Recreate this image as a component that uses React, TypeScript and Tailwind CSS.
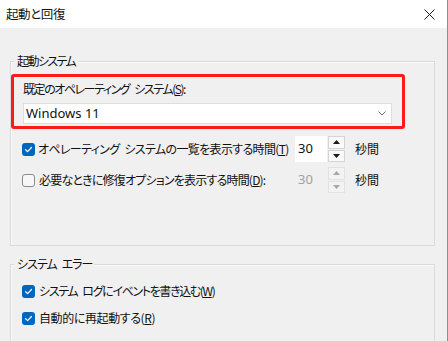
import React from "react";

const jp = "font-['Noto_Sans_CJK_JP','Noto_Sans',sans-serif] [font-feature-settings:'palt']";

function Sp() {
  return <span className="inline-block w-[5px]" />;
}

function Check({ checked }: { checked: boolean }) {
  if (checked) {
    return (
      <span className="w-[13px] h-[13px] shrink-0 rounded-[3px] bg-[#0067c0] flex items-center justify-center">
        <svg width="9" height="9" viewBox="0 0 9 9">
          <path d="M1.6 4.7 L3.6 6.6 L7.5 2.5" stroke="white" strokeWidth="1.2" fill="none" strokeLinecap="round" strokeLinejoin="round" />
        </svg>
      </span>
    );
  }
  return <span className="w-[13px] h-[13px] shrink-0 rounded-[3px] border border-[#8c8c8c] bg-[#f7f7f7]" />;
}

function Arrow({ up, disabled }: { up: boolean; disabled?: boolean }) {
  return (
    <svg width="7" height="4" viewBox="0 0 7 4">
      <path d={up ? "M0 4 L3.5 0 L7 4 Z" : "M0 0 L3.5 4 L7 0 Z"} fill={disabled ? "#a8a8a8" : "#1a1a1a"} />
    </svg>
  );
}

function Spin({ disabled }: { disabled?: boolean }) {
  const btn =
    "flex-1 flex items-center justify-center border " +
    (disabled ? "border-[#e2e2e2] bg-[#f3f3f3]" : "border-[#d4d4d4] bg-[#fafafa]");
  return (
    <div className="flex items-stretch h-[26px] shrink-0">
      <div
        className={
          "w-[32px] flex items-center pl-[3px] text-[13px] font-['Noto_Sans',sans-serif] " +
          (disabled ? "text-[#a0a0a0]" : "bg-white text-[#111]")
        }
      >
        30
      </div>
      <div className="w-[17px] ml-[1px] flex flex-col gap-[1px]">
        <div className={btn}>
          <Arrow up disabled={disabled} />
        </div>
        <div className={btn}>
          <Arrow up={false} disabled={disabled} />
        </div>
      </div>
    </div>
  );
}

function Group({
  title,
  children,
  className,
  titleClass,
}: {
  title: React.ReactNode;
  children: React.ReactNode;
  className?: string;
  titleClass?: string;
}) {
  return (
    <div className={"relative border border-[#dadada] shadow-[inset_1px_1px_0_#fafafa] " + (className ?? "")}>
      <span
        className={
          "absolute left-[3px] -top-[10px] px-[3px] bg-[#f0f0f0] text-[12px] leading-[18px] text-[#111] " +
          (titleClass ?? "")
        }
      >
        {title}
      </span>
      {children}
    </div>
  );
}

export default function App() {
  return (
    <div className={"w-[448px] h-[341px] overflow-hidden bg-[#f0f0f0] border-r border-[#8f8f8f] text-[#111] " + jp}>
      <div className="h-[28px] bg-white flex items-center justify-between pl-[6px] pr-[12px]">
        <span className="text-[12.5px] leading-[18px] tracking-[-0.4px]">起動と回復</span>
        <svg width="11" height="11" viewBox="0 0 11 11">
          <path d="M0.5 0.5 L10.5 10.5 M10.5 0.5 L0.5 10.5" stroke="#1a1a1a" strokeWidth="1" />
        </svg>
      </div>
      <div className="pt-[33px] pl-[10px] pr-[12px]">
        <Group title="起動システム" className="h-[185px]" titleClass="tracking-[-1.6px]">
          <div className="mt-[12px] w-[394px] h-[55px] border-[3px] border-[#ff1a1a] rounded-[3px] pt-[3px]">
            <div className="pl-[9px] text-[12px] leading-[18px] tracking-[-1.45px]">
              既定のオペレーティング<Sp />システム(<span className="underline">S</span>):
            </div>
            <div className="ml-[9px] mt-[5px] w-[369px] h-[21px] bg-white border border-[#dedede] flex items-center justify-between pl-[2px] pr-[5px]">
              <span className="text-[13px] font-['Noto_Sans',sans-serif]">Windows 11</span>
              <svg width="8" height="5" viewBox="0 0 8 5">
                <path d="M0.5 0.5 L4 4 L7.5 0.5" stroke="#6a6a6a" strokeWidth="1" fill="none" />
              </svg>
            </div>
          </div>
          <div className="mt-[7px] pl-[11px] flex items-center h-[26px]">
            <Check checked />
            <div className="ml-[3px] w-[251px] shrink-0 overflow-hidden whitespace-nowrap text-[12px] tracking-[-0.65px]">
              オペレーティング<Sp />システムの一覧を表示する時間(<span className="underline">T</span>):
            </div>
            <div className="ml-[6px]">
              <Spin />
            </div>
            <span className="ml-[10px] text-[12px]">秒間</span>
          </div>
          <div className="mt-[5px] pl-[11px] flex items-center h-[26px]">
            <Check checked={false} />
            <div className="ml-[4px] w-[250px] shrink-0 overflow-hidden whitespace-nowrap text-[12px] tracking-[-0.8px]">
              必要なときに修復オプションを表示する時間(<span className="underline">D</span>):
            </div>
            <div className="ml-[6px]">
              <Spin disabled />
            </div>
            <span className="ml-[10px] text-[12px]">秒間</span>
          </div>
        </Group>
        <Group
          title={
            <>
              システム<Sp />エラー
            </>
          }
          className="mt-[18px] h-[120px]"
          titleClass="tracking-[-1px]"
        >
          <div className="mt-[18px] pl-[11px] flex items-center gap-[4px] h-[16px]">
            <Check checked />
            <span className="text-[12px] tracking-[-1.35px]">
              システム<Sp />ログにイベントを書き込む(<span className="underline">W</span>)
            </span>
          </div>
          <div className="mt-[11px] pl-[11px] flex items-center gap-[4px] h-[16px]">
            <Check checked />
            <span className="text-[12px] tracking-[-0.4px]">
              自動的に再起動する(<span className="underline">R</span>)
            </span>
          </div>
        </Group>
      </div>
    </div>
  );
}
